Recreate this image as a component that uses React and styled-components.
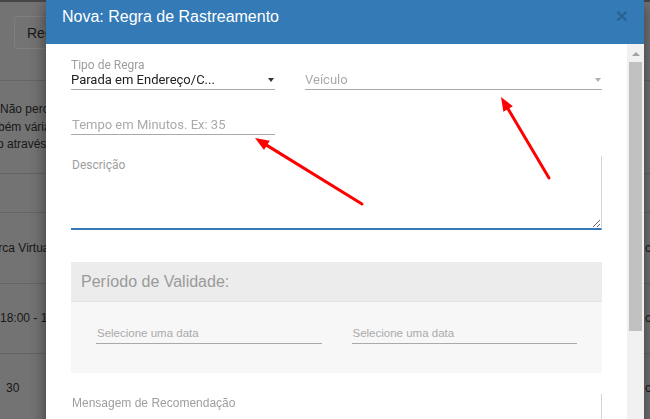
import React from 'react';
import styled, { createGlobalStyle, css } from 'styled-components';

const GlobalStyle = createGlobalStyle`
  html, body {
    margin: 0;
    width: 650px;
    height: 419px;
    overflow: hidden;
    background: #e6e6e6;
    font-family: "Liberation Sans", Arial, sans-serif;
  }
`;

/* ---------- page behind the modal ---------- */

const Page = styled.div`
  width: 650px;
  height: 419px;
  overflow: hidden;
  background: #e6e6e6;
  color: #333;
  font-size: 12px;
`;

const TopStrip = styled.div`
  height: 2px;
  background: #8c8c8c;
`;

const Toolbar = styled.div`
  display: flex;
  align-items: flex-start;
  box-sizing: border-box;
  height: 79px;
  padding: 14px;
  border-bottom: 1px solid #c8c8c8;
`;

const GhostButton = styled.button`
  height: 33px;
  padding: 0 12px;
  border: 1px solid #fff;
  border-radius: 4px;
  background: transparent;
  color: #333;
  font-family: "Liberation Sans", Arial, sans-serif;
  font-size: 14px;
`;

const Intro = styled.div`
  margin: 20px 0 19px;
  line-height: 17.5px;
  white-space: nowrap;
`;

const IntroLine = styled.div`
  text-indent: ${(p) => p.indent || 0}px;
`;

const Table = styled.div`
  border-top: 1px solid #c8c8c8;
`;

const Row = styled.div`
  display: grid;
  grid-template-columns: 640px 1fr;
  align-items: center;
  height: ${(p) => p.h}px;
  border-bottom: 1px solid #c8c8c8;
  white-space: nowrap;
  overflow: hidden;
`;

const Cell = styled.div`
  padding-left: ${(p) => p.pad || 0}px;
  text-indent: ${(p) => p.indent || 0}px;
  overflow: hidden;
`;

const Backdrop = styled.div`
  position: fixed;
  inset: 0;
  background: rgba(0, 0, 0, 0.5);
`;

/* ---------- modal ---------- */

const Modal = styled.div`
  position: fixed;
  top: 0;
  left: 46px;
  width: 598px;
  height: 460px;
  display: flex;
  flex-direction: column;
  background: #fff;
  box-shadow: 0 5px 15px rgba(0, 0, 0, 0.5);
`;

const Header = styled.div`
  display: flex;
  justify-content: space-between;
  align-items: flex-start;
  flex-shrink: 0;
  height: 44px;
  box-sizing: border-box;
  padding: 5px 16px 0 16px;
  background: #337ab7;
`;

const Title = styled.h4`
  margin: 0;
  font-size: 16px;
  font-weight: normal;
  line-height: 23px;
  color: #fff;
`;

const Close = styled.button`
  padding: 0;
  border: 0;
  background: transparent;
  font-family: "Liberation Sans", Arial, sans-serif;
  font-size: 21px;
  font-weight: bold;
  line-height: 21px;
  color: #000;
  opacity: 0.2;
`;

const Body = styled.div`
  flex: 1;
  display: flex;
  min-height: 0;
`;

const Content = styled.div`
  flex: 1;
  padding: 14px 25px 0;
  display: flex;
  flex-direction: column;
  overflow: hidden;

  & > * {
    flex-shrink: 0;
  }
`;

const Scrollbar = styled.div`
  width: 17px;
  background: #f1f1f1;
  display: flex;
  flex-direction: column;
  align-items: center;
`;

const ScrollArrow = styled.div`
  margin-top: 8px;
  width: 0;
  height: 0;
  border-left: 4px solid transparent;
  border-right: 4px solid transparent;
  border-bottom: 4px solid #a3a3a3;
`;

const ScrollThumb = styled.div`
  margin-top: 6px;
  width: 13px;
  height: 269px;
  background: #c1c1c1;
`;

const FieldRow = styled.div`
  display: grid;
  grid-template-columns: 204px 1fr;
  column-gap: 30px;
  align-items: end;
`;

const Field = styled.div`
  display: flex;
  flex-direction: column;
`;

const Label = styled.label`
  height: 14px;
  font-family: Roboto, "Liberation Sans", sans-serif;
  font-size: 12px;
  line-height: 14px;
  color: #9e9e9e;
`;

const SelectBox = styled.div`
  display: flex;
  align-items: center;
  justify-content: space-between;
  height: 16px;
  padding-bottom: 1px;
  border-bottom: 1px solid #aaa;
  font-family: Roboto, "Liberation Sans", sans-serif;
  font-size: 13px;
  line-height: 16px;
  color: ${(p) => (p.empty ? '#aaa' : '#222')};
`;

const Caret = styled.span`
  width: 0;
  height: 0;
  margin-right: 1px;
  border-left: 3.5px solid transparent;
  border-right: 3.5px solid transparent;
  border-top: 4px solid ${(p) => (p.light ? '#b0b0b0' : '#333')};
`;

const TextInput = styled.input`
  display: block;
  width: 100%;
  box-sizing: border-box;
  margin: 0;
  padding: 0 0 2px 1px;
  height: 19px;
  border: 0;
  border-bottom: 1px solid #aaa;
  outline: none;
  background: transparent;
  font-family: ${(p) => (p.$roboto ? 'Roboto, "Liberation Sans", sans-serif' : '"Liberation Sans", Arial, sans-serif')};
  font-size: ${(p) => (p.$roboto ? 13 : 11.5)}px;
  line-height: 16px;
  color: #222;

  &::placeholder {
    color: #aaa;
  }
`;

const ShortField = styled.div`
  width: 204px;
  margin-top: ${(p) => p.top}px;
`;

const TextArea = styled.textarea`
  display: block;
  box-sizing: border-box;
  width: 100%;
  margin: ${(p) => p.top}px 0 0;
  padding: 2px 1px;
  height: 74px;
  border: 0;
  border-right: 1px solid #d4d4d4;
  outline: none;
  resize: vertical;
  font-family: ${(p) => (p.$roboto ? 'Roboto, "Liberation Sans", sans-serif' : '"Liberation Sans", Arial, sans-serif')};
  font-size: 12px;
  line-height: 14px;

  ${(p) =>
    p.focused &&
    css`
      border-bottom: 2px solid #337ab7;
    `};

  &::placeholder {
    color: #9e9e9e;
  }
`;

const Panel = styled.div`
  margin-top: 32px;
  background: #f7f7f7;
`;

const PanelHeading = styled.div`
  height: 39px;
  padding: 0 10px;
  display: flex;
  align-items: center;
  background: #ececec;
  border-bottom: 1px solid #e3e3e3;
  font-size: 16px;
  color: #9a9a9a;
`;

const PanelBody = styled.div`
  display: grid;
  grid-template-columns: 1fr 1fr;
  column-gap: 30px;
  padding: 23px 25px 29px;
`;

/* ---------- annotation ---------- */

const Annotation = styled.svg`
  position: fixed;
  inset: 0;
  pointer-events: none;
`;

function Arrow({ x1, y1, x2, y2 }) {
  const a = Math.atan2(y2 - y1, x2 - x1);
  const len = 14;
  const w = 5.5;
  const bx = x2 - Math.cos(a) * len;
  const by = y2 - Math.sin(a) * len;
  const px = -Math.sin(a) * w;
  const py = Math.cos(a) * w;
  return (
    <g>
      <line x1={x1} y1={y1} x2={bx} y2={by} stroke="#f00" strokeWidth="3" strokeLinecap="round" />
      <polygon points={`${x2},${y2} ${bx + px},${by + py} ${bx - px},${by - py}`} fill="#f00" />
    </g>
  );
}

export default function App() {
  return (
    <>
      <GlobalStyle />
      <Page>
        <TopStrip />
        <Toolbar>
          <GhostButton>Regras de Rastreamento</GhostButton>
        </Toolbar>
        <Intro>
          <IntroLine>Não percebeu alguma regra na lista?</IntroLine>
          <IntroLine indent={-22}>também várias regras podem</IntroLine>
          <IntroLine indent={-19}>feito através do cadastro</IntroLine>
        </Intro>
        <Table>
          <Row h={38}>
            <Cell />
            <Cell />
          </Row>
          <Row h={70}>
            <Cell indent={-17}>Cerca Virtual</Cell>
            <Cell pad={5}>cia</Cell>
          </Row>
          <Row h={69}>
            <Cell>18:00 - 19:00</Cell>
            <Cell pad={5}>cia</Cell>
          </Row>
          <Row h={69}>
            <Cell pad={6}>30</Cell>
            <Cell pad={5}>cia</Cell>
          </Row>
        </Table>
      </Page>

      <Backdrop />

      <Modal>
        <Header>
          <Title>Nova: Regra de Rastreamento</Title>
          <Close>×</Close>
        </Header>
        <Body>
          <Content>
            <FieldRow>
              <Field>
                <Label>Tipo de Regra</Label>
                <SelectBox>
                  <span>Parada em Endereço/C...</span>
                  <Caret />
                </SelectBox>
              </Field>
              <Field>
                <SelectBox empty>
                  <span>Veículo</span>
                  <Caret light />
                </SelectBox>
              </Field>
            </FieldRow>

            <ShortField top={26}>
              <TextInput $roboto placeholder="Tempo em Minutos. Ex: 35" />
            </ShortField>

            <TextArea $roboto focused top={21} placeholder="Descrição" />

            <Panel>
              <PanelHeading>Período de Validade:</PanelHeading>
              <PanelBody>
                <TextInput placeholder="Selecione uma data" />
                <TextInput placeholder="Selecione uma data" />
              </PanelBody>
            </Panel>

            <TextArea top={21} placeholder="Mensagem de Recomendação" />
          </Content>
          <Scrollbar>
            <ScrollArrow />
            <ScrollThumb />
          </Scrollbar>
        </Body>
      </Modal>

      <Annotation width="650" height="419" viewBox="0 0 650 419">
        <Arrow x1={362} y1={204} x2={255} y2={138} />
        <Arrow x1={549} y1={178} x2={501} y2={97} />
      </Annotation>
    </>
  );
}
